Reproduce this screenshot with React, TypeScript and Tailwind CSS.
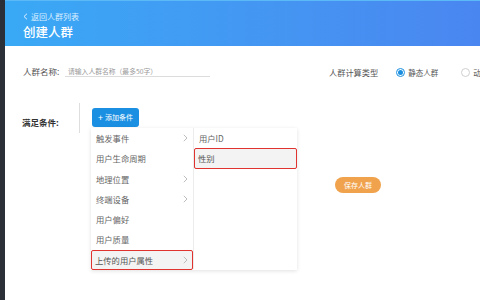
import React from "react";

const font = { fontFamily: '"Noto Sans CJK SC", "Noto Sans", sans-serif' };

function Chevron() {
  return (
    <svg width="5" height="8" viewBox="0 0 5 8" className="shrink-0">
      <path d="M0.8 0.8 L4 4 L0.8 7.2" fill="none" stroke="#b5b5b5" strokeWidth="0.9" />
    </svg>
  );
}

function MenuItem({ label, arrow, active }: { label: string; arrow?: boolean; active?: boolean }) {
  return (
    <div
      className={
        active
          ? "h-[20.3px] flex items-center justify-between pl-[4px] pr-[5px] bg-[#f3f3f3] outline-[1.5px] outline-solid outline-[#e0322f] -outline-offset-[1px] rounded-[2px] text-[#555]"
          : "h-[20.3px] flex items-center justify-between pl-[5px] pr-[5px] text-[#666]"
      }
    >
      <span className="text-[8.3px] leading-none whitespace-nowrap">{label}</span>
      {arrow ? <Chevron /> : null}
    </div>
  );
}

export default function App() {
  return (
    <div className="w-[480px] h-[300px] flex overflow-hidden bg-white" style={font}>
      <div className="w-[5px] h-full bg-[#2b2f38] shrink-0" />
      <div className="flex-1 flex flex-col min-w-0">
        <div className="h-[46px] bg-linear-to-r from-[#39a9f5] to-[#4a86f0] pl-[18px] pt-[10px] flex flex-col border-t border-[#5cb9f7]">
          <div className="flex items-center gap-[3px] text-[8px] leading-none text-[#dcefff] h-[11px]">
            <svg width="5" height="7" viewBox="0 0 5 7">
              <path d="M4 0.7 L1 3.5 L4 6.3" fill="none" stroke="#dcefff" strokeWidth="1" />
            </svg>
            <span>返回人群列表</span>
          </div>
          <div className="mt-[4px] text-[12.5px] leading-none text-white font-medium">创建人群</div>
        </div>

        <div className="flex flex-col">
          <div className="h-[33px] mt-[9px] flex items-center pl-[18px] whitespace-nowrap">
            <span className="text-[8.5px] text-[#555] w-[42px] shrink-0">人群名称:</span>
            <div className="w-[145px] shrink-0 border-b border-[#dcdcdc] pl-[3px] pb-[2px] text-[6.8px] text-[#999] leading-none mt-[2px]">
              请输入人群名称（最多50字）
            </div>
            <div className="ml-[119px] flex items-center mt-[2px] shrink-0">
              <span className="text-[8.2px] text-[#555]">人群计算类型</span>
              <div className="ml-[18px] w-[9px] h-[9px] rounded-full border border-[#1a8fe0] flex items-center justify-center shrink-0">
                <div className="w-[5px] h-[5px] rounded-full bg-[#1a8fe0]" />
              </div>
              <span className="ml-[3px] text-[7.5px] text-[#555]">静态人群</span>
              <div className="ml-[23px] w-[9px] h-[9px] rounded-full border border-[#cfcfcf] shrink-0" />
              <span className="ml-[3px] text-[7.5px] text-[#555]">动态人群</span>
            </div>
          </div>

          <div className="mt-[15px] flex items-start pl-[17px]">
            <span className="mt-[13px] text-[8.5px] font-bold text-[#333] w-[57px] shrink-0">满足条件:</span>
            <div className="w-px h-[30px] bg-[#dedede] shrink-0" />
            <div className="relative ml-[12px] mt-[5px]">
              <div className="h-[19px] w-[47px] rounded-[3px] bg-[#1b8fe2] text-white text-[7px] flex items-center justify-center gap-[2px] whitespace-nowrap">
                <span className="text-[9px] leading-none">+</span>
                <span>添加条件</span>
              </div>
              <div className="absolute left-[-1px] top-[20px] flex shadow-[0_1px_4px_rgba(0,0,0,0.12)] bg-white">
                <div className="w-[102px] flex flex-col">
                  <MenuItem label="触发事件" arrow />
                  <MenuItem label="用户生命周期" />
                  <MenuItem label="地理位置" arrow />
                  <MenuItem label="终端设备" arrow />
                  <MenuItem label="用户偏好" />
                  <MenuItem label="用户质量" />
                  <MenuItem label="上传的用户属性" arrow active />
                </div>
                <div className="w-[104px] h-[141px] flex flex-col border-l border-[#ececec]">
                  <MenuItem label="用户ID" />
                  <MenuItem label="性别" active />
                </div>
              </div>
            </div>
          </div>

          <div className="mt-[44px] ml-[330px] w-[46px] h-[16px] rounded-full bg-[#f0a24c] text-white text-[7px] flex items-center justify-center whitespace-nowrap">
            保存人群
          </div>
        </div>
      </div>
    </div>
  );
}
